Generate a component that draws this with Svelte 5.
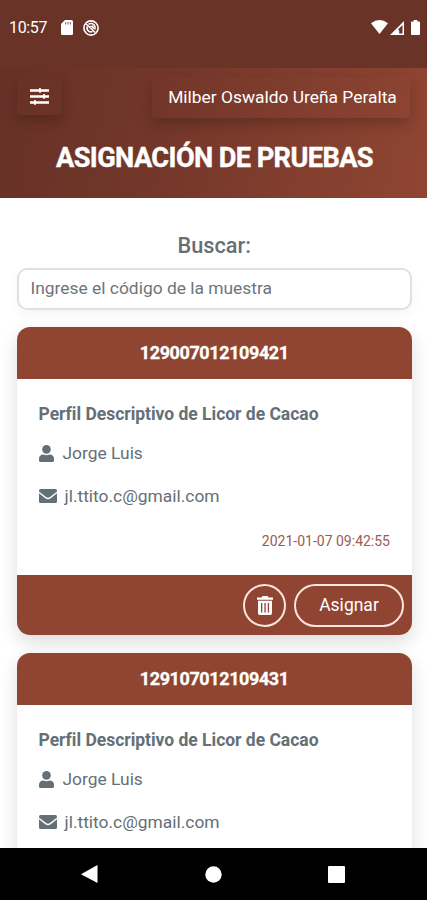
<script>
  const samples = [
    { code: '129007012109421', test: 'Perfil Descriptivo de Licor de Cacao', name: 'Jorge Luis', email: 'jl.ttito.c@gmail.com', date: '2021-01-07 09:42:55' },
    { code: '129107012109431', test: 'Perfil Descriptivo de Licor de Cacao', name: 'Jorge Luis', email: 'jl.ttito.c@gmail.com' }
  ];
</script>

<div class="screen">
  <div class="status">
    <span class="time">10:57</span>
    <svg class="sd" width="12" height="15" viewBox="0 0 12 15"><path fill="#fff" d="M4 0h6.5Q12 0 12 1.5v12q0 1.500-1.500 1.500h-9Q0 15 0 13.500V4z"/><path stroke="#693328" stroke-width=".8" d="M4.700 2v2.500M7 2v2.500M9.300 2v2.500"/></svg>
    <svg class="sync" width="16" height="16" viewBox="0 0 16 16" fill="none" stroke="#fff"><circle cx="8" cy="8" r="7.100" stroke-width="1.600"/><path stroke-width="1.600" d="M3.200 4l9 8.500M5.500 4.200q3.500-1.700 5.700.8 1.800 2.300.5 4.500M4.200 6.500q-.8 3 1.500 4.700 1.800 1.100 3.800.3M6.500 7.300l3-1 1.200 2.500"/></svg>
    <span class="grow"></span>
    <svg width="17" height="15" viewBox="0 0 17 15"><path fill="#fff" d="M0 3.300Q8.500-3.300 17 3.300L8.500 14z"/></svg>
    <svg class="signal" width="14" height="14" viewBox="0 0 14 14"><path fill="#fff" fill-rule="evenodd" d="M14 0v14H0zM12.500 4L8 8.500l1.200 1v3h3.300z"/></svg>
    <svg class="battery" width="9" height="15" viewBox="0 0 10 15" preserveAspectRatio="none"><path fill="#fff" d="M3 0h4v1.500h2q1 0 1 1V14q0 1-1 1H1q-1 0-1-1V2.500q0-1 1-1h2z"/></svg>
  </div>

  <header>
    <div class="toolbar">
      <button class="menu" aria-label="Menú">
        <svg width="19" height="17" viewBox="0 0 19 17"><path fill="none" stroke="#fff" stroke-width="2.500" d="M0 2.500h19M0 8.500h19M0 14.500h19"/><path fill="none" stroke="#fff" stroke-width="2.300" stroke-linecap="round" d="M10 1.200v2.600M14 7.200v2.600M5 13.200v2.600"/></svg>
      </button>
      <div class="user">Milber Oswaldo Ureña Peralta</div>
    </div>
    <h1>ASIGNACIÓN DE PRUEBAS</h1>
  </header>

  <main>
    <label for="search">Buscar:</label>
    <input id="search" placeholder="Ingrese el código de la muestra" />
    {#each samples as s}
      <article class:partial={!s.date}>
        <h2>{s.code}</h2>
        <div class="body">
          <h3>{s.test}</h3>
          <p class="person">
            <svg width="15" height="17" viewBox="0 0 15 17" fill="#656f76"><circle cx="7.500" cy="4.400" r="4.300"/><path d="M4.500 9.500Q7.500 11 10.500 9.500 15 9.500 15 14v1.500q0 1.500-1.500 1.500h-12Q0 17 0 15.500V14Q0 9.500 4.500 9.500z"/></svg>
            <span>{s.name}</span>
          </p>
          <p class="mail">
            <svg width="18" height="14" viewBox="0 0 18 14" fill="#656f76"><path d="M1.500 0h15Q18 0 18 1.500v1L11 8q-2 1.500-4 0L0 2.500v-1Q0 0 1.500 0z"/><path d="M0 4.300l6.300 5q2.700 1.900 5.400 0l6.300-5v8.200q0 1.500-1.500 1.500h-15Q0 14 0 12.500z"/></svg>
            <span>{s.email}</span>
          </p>
          {#if s.date}<time>{s.date}</time>{/if}
        </div>
        {#if s.date}
          <footer>
            <button class="trash" aria-label="Eliminar">
              <svg width="16" height="19" viewBox="0 0 16 19"><path fill="#fff" fill-rule="evenodd" d="M0 1.500h4.500L5.500 0h5l1 1.500H16v2.200H0zM1 4.800h14v12.500q0 1.700-1.700 1.700H2.700Q1 19 1 17.300zM4 7v9.500h1.300V7zM7.400 7v9.500h1.300V7zM10.800 7v9.500h1.300V7z"/></svg>
            </button>
            <button class="assign">Asignar</button>
          </footer>
        {/if}
      </article>
    {/each}
  </main>

  <nav>
    <svg width="17" height="18" viewBox="0 0 17 18"><path fill="#fff" d="M16.500 0v18L0 9.200z"/></svg>
    <svg width="17" height="17" viewBox="0 0 17 17"><circle cx="8.500" cy="8.500" r="8.200" fill="#fff"/></svg>
    <svg width="17" height="17" viewBox="0 0 17 17"><rect width="17" height="17" rx="1" fill="#fff"/></svg>
  </nav>
</div>

<style>
  :global(body) { margin: 0; overflow: hidden; }
  .screen { width: 427px; height: 900px; display: flex; flex-direction: column; overflow: hidden; background: #fff; font-family: Roboto, "Liberation Sans", sans-serif; color: #656f76; }
  .screen * { box-sizing: border-box; }
  svg { display: block; flex: none; }
  button { font: inherit; color: #fff; background: none; padding: 0; display: flex; align-items: center; justify-content: center; }
  .status { height: 68px; flex: none; padding: 0 7px 13px 9px; display: flex; align-items: center; background: #693328; color: #fff; }
  .time { font-size: 16px; width: 52px; letter-spacing: -.35px; }
  .sync { margin-left: 10px; }
  .grow { flex: 1; }
  .signal { margin-left: 2px; }
  .battery { margin-left: 7px; }
  header { height: 130px; flex: none; padding: 9px 17px 0; background: linear-gradient(100deg, #673127 0%, #74372a 40%, #904532 100%); color: #fff; }
  .toolbar { display: flex; justify-content: space-between; }
  .menu { width: 45px; height: 38px; border: 0; border-radius: 3px; box-shadow: 0 6px 13px #0003; }
  .user { width: 258px; height: 41px; padding: 0 0 1px 3px; border-radius: 3px; display: flex; align-items: center; justify-content: center; font-size: 17.400px; white-space: nowrap; box-shadow: 0 6px 13px #0003; }
  h1 { margin: 23px 0 0; padding-left: 2px; text-align: center; font-size: 27.200px; line-height: 34px; letter-spacing: -.600px; white-space: nowrap; -webkit-text-stroke: .4px #fff; }
  main { flex: 1; min-height: 0; overflow: hidden; padding: 34px 15px 0 16.500px; display: flex; flex-direction: column; }
  label { height: 36px; flex: none; padding-top: 1px; text-align: center; font-size: 21.700px; line-height: 26px; font-weight: 500; }
  input { height: 42px; flex: none; width: 100%; border: 2px solid #dfe2e3; border-radius: 10px; padding: 0 12px 2px; font: 17.400px Roboto, sans-serif; box-shadow: 0 5px 12px #0000000a; }
  input::placeholder { color: #6d757b; opacity: 1; }
  article { margin-top: 17px; flex: none; height: 308px; border-radius: 13px; box-shadow: 0 7px 18px #00000024; background: #fff; overflow: hidden; display: flex; flex-direction: column; }
  article + article { margin-top: 18px; }
  .partial { height: 248px; }
  h2 { margin: 0; height: 52px; flex: none; background: #904532; color: #fff; text-align: center; font-size: 18px; line-height: 51px; letter-spacing: -.400px; -webkit-text-stroke: .3px #fff; }
  .body { height: 196px; flex: none; padding: 22px 22px 0; display: flex; flex-direction: column; }
  h3 { margin: 0; font-size: 17.500px; line-height: 26px; letter-spacing: -.02px; white-space: nowrap; }
  p { margin: 0; display: flex; align-items: center; font-size: 17.400px; line-height: 26px; }
  .person { margin-top: 13px; gap: 9px; }
  .mail { margin-top: 17px; gap: 8px; }
  time { align-self: flex-end; margin-top: 21px; font-size: 14px; line-height: 22px; color: #9c5b50; }
  footer { height: 60px; flex: none; background: #904532; padding: 0 8px; display: flex; justify-content: flex-end; align-items: center; gap: 8px; }
  footer button { height: 43px; border: 2px solid #fbe5dc; border-radius: 22px; }
  .trash { width: 43px; }
  .assign { width: 110px; font-size: 17.500px; }
  nav { height: 52px; flex: none; background: #000; display: flex; justify-content: space-between; align-items: center; padding: 0 82px 0 81px; }
</style>
